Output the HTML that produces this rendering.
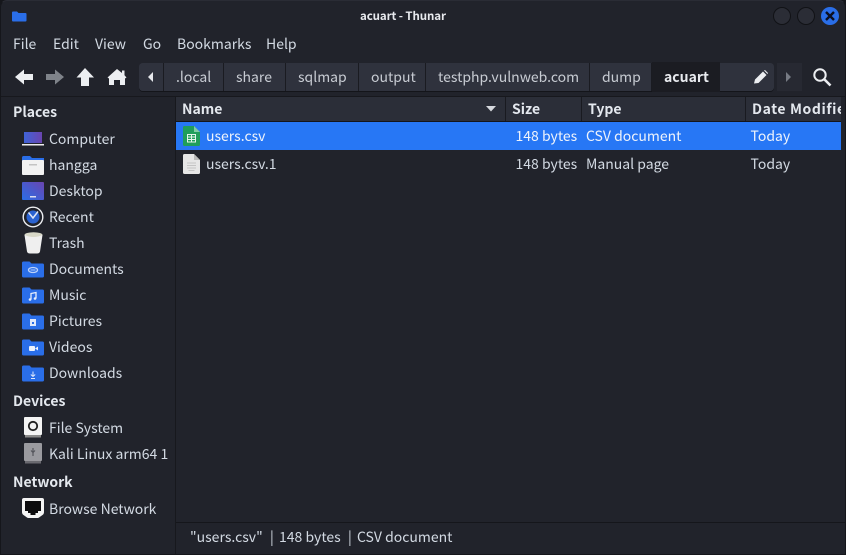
<!DOCTYPE html>
<html><head><meta charset="utf-8"><style>
html,body{margin:0;padding:0;background:#15161b}
#w{position:absolute;left:0;top:0;width:846px;height:555px;overflow:hidden;background:#21232b;border-radius:7px 7px 0 0;font-family:"Noto Sans CJK SC","Liberation Sans",sans-serif;font-size:14px;color:#d3dae3}
.t{position:absolute;white-space:nowrap;line-height:20px}
.b{font-weight:700;color:#e4e8ee}
.r{position:absolute}
svg{position:absolute;overflow:visible}
.btn{position:absolute;top:63px;height:28px;background:#2f323d;border-right:1px solid #1a1b21;box-sizing:border-box}
.hd{position:absolute;top:97px;height:24px;background:#2b2e38;border-right:1px solid #191a20;box-sizing:border-box}
</style></head><body><div id="w">
<!-- title bar -->
<svg style="left:12px;top:11px" width="15" height="11"><path d="M0 1.500Q0 .5 1 .5H5L6.500 2H13.500Q14.500 2 14.500 3V9.500Q14.500 10.500 13.500 10.500H1Q0 10.500 0 9.500Z" fill="#2a6ee8"/></svg>
<div class="t b" style="left:360px;top:6px;font-size:11.500px;color:#e8eaee;letter-spacing:-.1px">acuart - Thunar</div>
<svg style="left:773px;top:6px" width="70" height="20">
<circle cx="9" cy="10" r="8.500" fill="#2b2d36" stroke="#111216"/>
<circle cx="33" cy="10" r="8.500" fill="#2b2d36" stroke="#111216"/>
<circle cx="57" cy="10" r="9" fill="#2a6ee8"/>
<path d="M53 6L61 14M61 6L53 14" stroke="#0d1020" stroke-width="2.400"/>
</svg>
<!-- menu -->
<div class="t" style="left:13px;top:34px">File</div>
<div class="t" style="left:53px;top:34px">Edit</div>
<div class="t" style="left:95px;top:34px">View</div>
<div class="t" style="left:143px;top:34px">Go</div>
<div class="t" style="left:177px;top:34px">Bookmarks</div>
<div class="t" style="left:266px;top:34px">Help</div>
<!-- toolbar icons -->
<svg style="left:15px;top:68px" width="120" height="20">
<path d="M0 9L9 1.500V6H18V12H9V16.500Z" fill="#eceef1"/>
<path d="M31 6H40V1.500L49 9L40 16.500V12H31Z" fill="#7f838a"/>
<path d="M70 0L79 9.500H74V18H66V9.500H61.500Z" fill="#eceef1"/>
<path d="M102 1L107 5V2.500H109.500V7.200L111.500 9.500L110 10.500V17H105V12H99V17H94V10.500L92.500 9.500Z" fill="#eceef1"/>
</svg>
<!-- path bar -->
<div class="r" style="left:139px;top:63px;width:635px;height:28px;background:#2f323d;border-radius:4px;box-shadow:0 1px 0 #14151a"></div>
<div class="btn" style="left:139px;width:25px;border-radius:4px 0 0 4px"></div>
<svg style="left:148px;top:72px" width="6" height="10"><path d="M5 0V10L0 5Z" fill="#e6e8ec"/></svg>
<div class="btn" style="left:164px;width:60px"></div>
<div class="btn" style="left:224px;width:62px"></div>
<div class="btn" style="left:286px;width:73px"></div>
<div class="btn" style="left:359px;width:67px"></div>
<div class="btn" style="left:426px;width:164px"></div>
<div class="btn" style="left:590px;width:62px"></div>
<div class="r" style="left:652px;top:62px;width:68px;height:30px;background:#1b1c22"></div>
<div class="r" style="left:720px;top:63px;width:54px;height:28px;background:#2f323d;border-radius:0 4px 4px 0"></div>
<div class="t" style="left:176px;top:67px;color:#c8ccd3">.local</div>
<div class="t" style="left:236px;top:67px;color:#c8ccd3">share</div>
<div class="t" style="left:298px;top:67px;color:#c8ccd3">sqlmap</div>
<div class="t" style="left:371px;top:67px;color:#c8ccd3">output</div>
<div class="t" style="left:438px;top:67px;color:#c8ccd3">testphp.vulnweb.com</div>
<div class="t" style="left:602px;top:67px;color:#c8ccd3">dump</div>
<div class="t b" style="left:664px;top:67px;color:#e8eaee">acuart</div>
<svg style="left:754px;top:70px" width="14" height="14"><path d="M0 13.500L1 9.500L9 1.500L12.500 5L4.500 13ZM10 .5L11 0L14 3L13.500 4Z" fill="#eceef1"/></svg>
<div class="r" style="left:777px;top:63px;width:25px;height:28px;background:#272932"></div>
<svg style="left:786px;top:72px" width="6" height="10"><path d="M0 0V10L5 5Z" fill="#777b84"/></svg>
<svg style="left:813px;top:68px" width="19" height="19"><circle cx="7" cy="7" r="5.700" fill="none" stroke="#eceef1" stroke-width="2"/><path d="M11 11L17.500 17.500" stroke="#eceef1" stroke-width="2.600"/></svg>
<!-- separators -->
<div class="r" style="left:0;top:96px;width:846px;height:1px;background:#17181d"></div>
<div class="r" style="left:175px;top:97px;width:1px;height:458px;background:#17181d"></div>
<!-- column headers -->
<div class="hd" style="left:176px;width:330px"></div>
<div class="hd" style="left:506px;width:76px"></div>
<div class="hd" style="left:582px;width:164px"></div>
<div class="hd" style="left:746px;width:95px;border-right:0"></div>
<div class="r" style="left:176px;top:121px;width:665px;height:1px;background:#14151a"></div>
<div class="t b" style="left:182px;top:99px">Name</div>
<svg style="left:486px;top:106px" width="11" height="6"><path d="M0 0H10L5 5.500Z" fill="#d6d9de"/></svg>
<div class="t b" style="left:512px;top:99px">Size</div>
<div class="t b" style="left:588px;top:99px">Type</div>
<div class="t b" style="left:752px;top:99px;width:89px;overflow:hidden;letter-spacing:.6px">Date Modified</div>
<!-- rows -->
<div class="r" style="left:176px;top:122px;width:665px;height:28px;background:#2777f5"></div>
<svg style="left:183px;top:126px" width="17" height="21"><path d="M0 1.500Q0 0 1.500 0H11L17 6V18.500Q17 20 15.500 20H1.500Q0 20 0 18.500Z" fill="#1f9e5b"/><path d="M11 0L17 6H11Z" fill="#7fcca3"/><path d="M4.500 8.500H12.500V16H4.500ZM4.500 11H12.500M4.500 13.500H12.500M8.500 8.500V16" fill="none" stroke="#e4f5ea" stroke-width="1"/></svg>
<div class="t" style="left:206px;top:126px;color:#eef3fb">users.csv</div>
<div class="t" style="left:515.500px;top:126px;color:#eef3fb">148 bytes</div>
<div class="t" style="left:586px;top:126px;color:#eef3fb">CSV document</div>
<div class="t" style="left:750.500px;top:126px;color:#eef3fb">Today</div>
<svg style="left:183px;top:154px" width="17" height="21"><path d="M0 1.500Q0 0 1.500 0H11L17 6V18.500Q17 20 15.500 20H1.500Q0 20 0 18.500Z" fill="#e6e6e6"/><path d="M11 0L17 6H11Z" fill="#bbb"/><path d="M4 9H13M4 11.500H13M4 14H13M5.500 16.500H11.500" stroke="#c4c4c4" stroke-width="1"/></svg>
<div class="t" style="left:206px;top:154px">users.csv.1</div>
<div class="t" style="left:515.500px;top:154px">148 bytes</div>
<div class="t" style="left:586px;top:154px">Manual page</div>
<div class="t" style="left:750.500px;top:154px">Today</div>
<!-- scrollbar strip -->
<div class="r" style="left:841px;top:97px;width:5px;height:458px;background:#21232b"></div>
<!-- sidebar -->
<div class="t b" style="left:13px;top:102px">Places</div>
<svg style="left:22px;top:131px" width="22" height="17"><defs><linearGradient id="g" x1="0" y1="0" x2="1" y2="0"><stop offset="0" stop-color="#3f63d8"/><stop offset="1" stop-color="#6a45b0"/></linearGradient></defs><rect x="2" y="1" width="18" height="11" fill="url(#g)"/><rect x="0" y="13" width="22" height="1.500" fill="#eee"/></svg>
<div class="t" style="left:49px;top:129px">Computer</div>
<svg style="left:22px;top:155px" width="22" height="20"><path d="M0 3Q0 1 1.500 1H8L10 3H22V6H0Z" fill="#2a6ee8"/><rect x="0" y="5" width="22" height="15" rx="1" fill="#f2f2f2"/><rect x="7" y="9" width="8" height="1.500" fill="#c4c4c4"/></svg>
<div class="t" style="left:49px;top:155px">hangga</div>
<svg style="left:22px;top:182px" width="22" height="18"><defs><linearGradient id="h" x1="0" y1="1" x2="1" y2="0"><stop offset="0" stop-color="#2a6ee8"/><stop offset="1" stop-color="#6a45b0"/></linearGradient></defs><rect width="22" height="18" rx="1" fill="url(#h)"/><rect x="8" y="14" width="6" height="1.500" fill="#dde"/></svg>
<div class="t" style="left:49px;top:181px">Desktop</div>
<svg style="left:22px;top:206px" width="22" height="22"><circle cx="11" cy="11" r="9.800" fill="#20222a" stroke="#eceef1" stroke-width="1.400"/><circle cx="11" cy="11" r="6.500" fill="#2a62d0"/><path d="M6.500 6.500L11 12L16 5.500" fill="none" stroke="#dfe6f5" stroke-width="1.500"/></svg>
<div class="t" style="left:49px;top:207px">Recent</div>
<svg style="left:24px;top:232px" width="19" height="22"><ellipse cx="9.500" cy="3" rx="9" ry="2.800" fill="#d8d8c8"/><path d="M0.500 3Q9.500 7 18.500 3L16 19.500Q15.500 21.500 13 21.500H6Q3.500 21.500 3 19.500Z" fill="#efefef"/></svg>
<div class="t" style="left:49px;top:233px">Trash</div>
<svg style="left:22px;top:261px" width="22" height="17"><use href="#f"/><ellipse cx="11" cy="9" rx="4.500" ry="2.500" fill="none" stroke="#bcd2fa" stroke-width="1.300"/><path d="M8.500 9H13.500" stroke="#bcd2fa" stroke-width="1"/></svg>
<div class="t" style="left:49px;top:259px">Documents</div>
<svg style="left:22px;top:287px" width="22" height="17"><defs><path id="f" d="M0 2Q0 .5 1.500 .5H7.500L9.500 2.500H20.500Q22 2.500 22 4V15Q22 16.500 20.500 16.500H1.500Q0 16.500 0 15Z" fill="#2a6ee8"/></defs><use href="#f"/><path d="M9 12.500V6.500L14 5.500V11.500" fill="none" stroke="#e6eefc" stroke-width="1.300"/><circle cx="8" cy="12.500" r="1.300" fill="#e6eefc"/><circle cx="13" cy="11.500" r="1.300" fill="#e6eefc"/></svg>
<div class="t" style="left:49px;top:285px">Music</div>
<svg style="left:22px;top:313px" width="22" height="17"><use href="#f"/><rect x="8" y="6" width="6" height="7" fill="#dfe8fb"/><rect x="10" y="9" width="2" height="2" fill="#2a6ee8"/></svg>
<div class="t" style="left:49px;top:311px">Pictures</div>
<svg style="left:22px;top:339px" width="22" height="17"><use href="#f"/><rect x="7" y="7" width="6" height="5" rx="1" fill="#eef3fd"/><path d="M13 9.500L16 7.500V11.500Z" fill="#eef3fd"/></svg>
<div class="t" style="left:49px;top:337px">Videos</div>
<svg style="left:22px;top:365px" width="22" height="17"><use href="#f"/><path d="M11 6.500V11M8.800 9.500L11 11.500L13.200 9.500M9 13.500H13" fill="none" stroke="#dfe8fb" stroke-width="1"/></svg>
<div class="t" style="left:49px;top:363px">Downloads</div>
<div class="t b" style="left:13px;top:391px">Devices</div>
<svg style="left:24px;top:417px" width="18" height="21"><rect width="18" height="18" rx="1" fill="#f4f4f4"/><circle cx="9" cy="9" r="4.200" fill="none" stroke="#222" stroke-width="1.800"/><rect x="1" y="18" width="16" height="2.500" fill="#8b8b8b"/></svg>
<div class="t" style="left:49px;top:418px">File System</div>
<svg style="left:24px;top:443px" width="18" height="21"><rect width="18" height="18" rx="1" fill="#9a9a9f"/><path d="M9 5V13M7 7.500L9 9.500L11 7.500" fill="none" stroke="#55565c" stroke-width="1.200"/><rect x="1" y="18" width="16" height="2.500" fill="#6a6a70"/></svg>
<div class="t" style="left:49px;top:444px;width:120px;overflow:hidden">Kali Linux arm64 1</div>
<div class="t b" style="left:13px;top:472px">Network</div>
<svg style="left:22px;top:498px" width="22" height="20"><path d="M2 0H20Q22 0 22 2V14Q22 16 20.500 17L17 19.500Q16.500 20 15.500 20H6.500Q5.500 20 5 19.500L1.500 17Q0 16 0 14V2Q0 0 2 0Z" fill="#f4f4f4"/><path d="M3 3H19V13H16V15H13.500V17H8.500V15H6V13H3Z" fill="#0c0c0e"/></svg>
<div class="t" style="left:49px;top:499px">Browse Network</div>
<!-- status -->
<div class="r" style="left:176px;top:522px;width:670px;height:1px;background:#15161b"></div>
<div class="t" style="left:190px;top:527px">"users.csv"</div>
<div class="t" style="left:270px;top:527px">|</div>
<div class="t" style="left:279px;top:527px">148 bytes</div>
<div class="t" style="left:348px;top:527px">|</div>
<div class="t" style="left:357px;top:527px">CSV document</div>
<!-- window edge -->
<div class="r" style="left:0;top:0;width:846px;height:555px;box-sizing:border-box;border:1px solid #15161b;border-top-color:#2a2c35;border-radius:7px 7px 0 0;pointer-events:none"></div>
</div></body></html>
